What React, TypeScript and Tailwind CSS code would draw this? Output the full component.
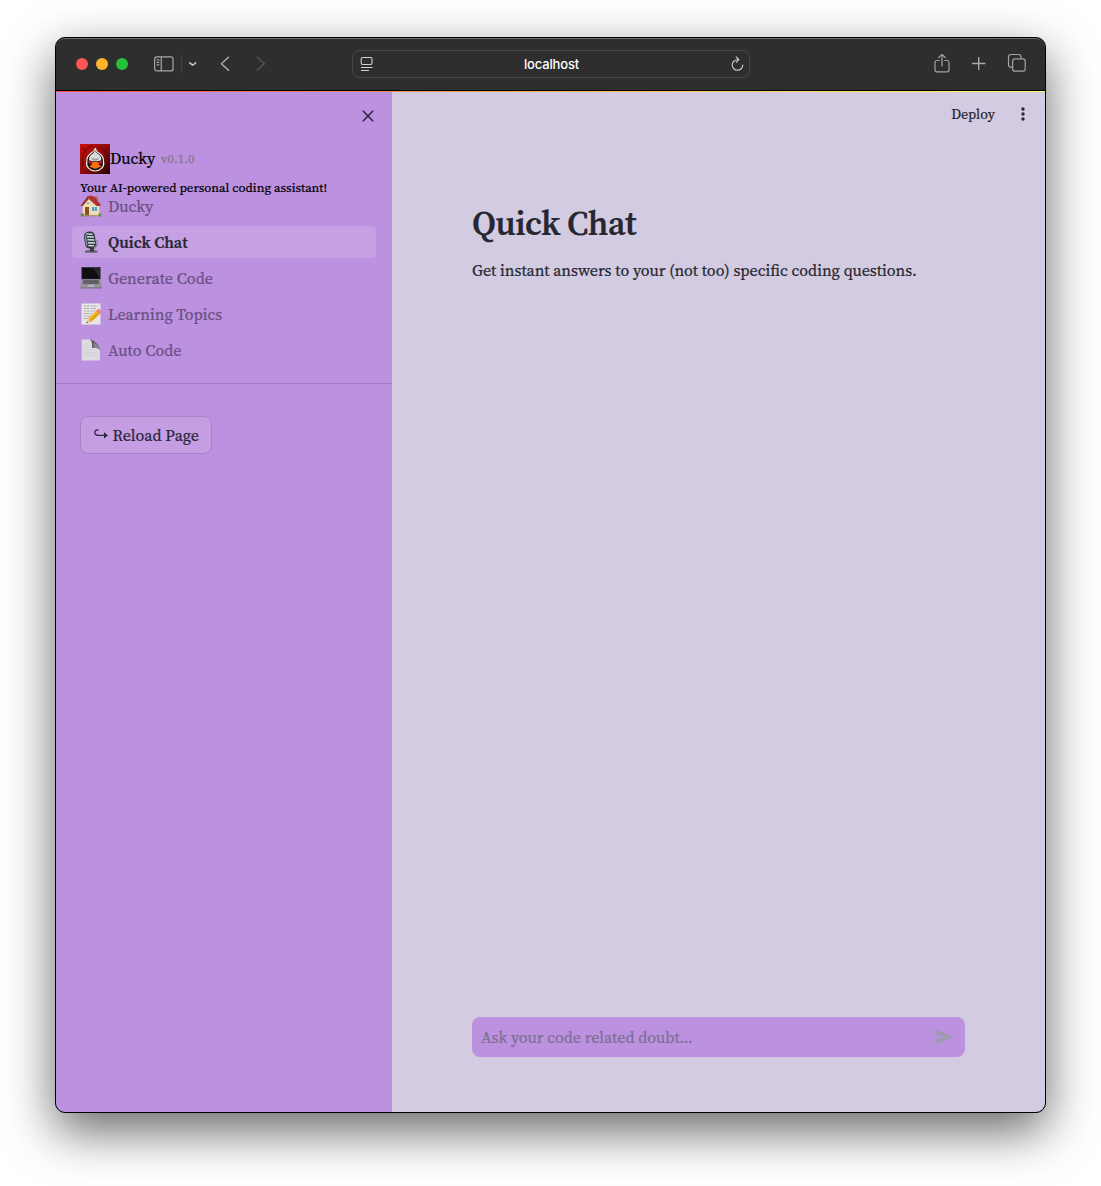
import React from "react";

function HouseIcon() {
  return (
    <svg width="22" height="22" viewBox="0 0 22 22">
      <path d="M14.500 1.500h3v6h-3z" fill="#b9604a" />
      <path d="M2.500 10L8.500 3l9 7.500h1.800v10H2.500z" fill="#eedcae" />
      <path d="M7.800 1L.8 10.500l1.400 1L8.800 4z" fill="#8c3432" />
      <path d="M7.500 1.500C8 .5 13 .8 14 1.500l7 8.500c-.5 1-3 1.500-4.500 1L8.800 4z" fill="#ae352f" />
      <rect x="5" y="12" width="4" height="8.500" fill="#8a5130" />
      <rect x="11.500" y="11.500" width="6" height="5" fill="#5a9cc5" stroke="#f7f0dc" strokeWidth=".8" />
      <path d="M14.500 11.500v5" stroke="#d9e8ee" strokeWidth=".6" />
      <path d="M4 20h6v1.500H4z" fill="#9a8a76" />
      <path d="M.8 18.500h3.200v3H.8zM18.500 18.500h2.800v3h-2.800z" fill="#5f8f3b" />
      <path d="M10 20h9v1.300h-9z" fill="#a99b78" />
      <circle cx="8" cy="8.200" r="1.200" fill="#8fb2c6" />
    </svg>
  );
}

function MicIcon() {
  return (
    <svg width="22" height="22" viewBox="0 0 22 22">
      <path d="M17 9c.8 5-1 8-3.500 9" fill="none" stroke="#77757f" strokeWidth="1" />
      <path d="M5 20.200c0-1.500 12.500-1.500 12.500 0v1.500H5z" fill="#66666c" />
      <rect x="10" y="15" width="4" height="5.500" fill="#3e3e44" />
      <g transform="rotate(-10 10 9)">
        <rect x="4.500" y=".5" width="11" height="17" rx="4.500" fill="#33393e" />
        <path d="M7 2.300l6.500 1.500M7.500 5.300l7 1.500M7.500 8.300l7 1.500M7.500 11.300l7 1.500M7.500 14.200l5.500 1.300" stroke="#cfe2e8" strokeWidth="1.400" />
        <path d="M6 3v11" stroke="#8b959a" strokeWidth="1.300" />
      </g>
    </svg>
  );
}

function LaptopIcon() {
  return (
    <svg width="22" height="22" viewBox="0 0 22 22">
      <path d="M1.300 0h19.400v12.500H1.300z" fill="#47434c" />
      <path d="M2.200 .8h17.600v11H2.200z" fill="#0f0e11" />
      <path d="M13.500 .8h6.300v11z" fill="#29272c" />
      <path d="M1.500 12.500h19l1.300 8H.2z" fill="#949297" />
      <path d="M3.500 13h15l.8 4H2.700z" fill="#626066" />
      <path d="M8 17.800h6l.5 2.200h-7z" fill="#b3b1b6" />
      <path d="M.2 20.300h21.600v1.200H.2z" fill="#77747c" />
    </svg>
  );
}

function MemoIcon() {
  return (
    <svg width="22" height="22" viewBox="0 0 22 22">
      <rect x="1.700" y=".5" width="18.800" height="21" fill="#e8e6e9" stroke="#cbc7cf" strokeWidth=".5" />
      <path d="M4 3h14M3.500 5.500h13M4 8h11M3.500 10.500h9M4 13h6M3.500 15.500h4" stroke="#96949c" strokeWidth=".8" strokeDasharray="2 .7 3 1" />
      <path d="M6.300 20.200l1.700-4.700 3.500 3.300z" fill="#e8c393" />
      <path d="M8 15.300L16.500 7.500l3.500 3.500-8.500 8z" fill="#f3b922" />
      <path d="M10.300 17.700l8.500-8" stroke="#dd9415" strokeWidth="1.200" />
      <path d="M16 8l1.800-1.700c1.200-1 4.500 2 3.300 3.200L19.500 11z" fill="#e88580" />
      <path d="M6.300 20.200l.6-1.700 1.100 1z" fill="#333" />
    </svg>
  );
}

function PageIcon() {
  return (
    <svg width="22" height="22" viewBox="0 0 22 22">
      <path d="M1.700.5h9.500l8.700 9v12H1.700z" fill="#deDce0" />
      <path d="M10 .5c3.500 0 9.800 6 9.900 10.500-1.600-2.300-4.700-2.800-8-2C12.500 5.500 12 2 10 .5z" fill="#5c5a60" />
      <path d="M14 3.500l-.5 5c3 0 5 .8 6.400 2.500-.1-2-3-5.500-5.900-7.500z" fill="#88858c" />
      <path d="M3.500 8h7M3.500 11h14M3.500 14h14M3.500 17h14" stroke="#cdcad1" strokeWidth=".8" />
    </svg>
  );
}

function DuckLogo() {
  return (
    <svg width="30" height="30" viewBox="0 0 30 30">
      <defs>
        <linearGradient id="duckBg" x1="0" y1="0" x2="1" y2="1">
          <stop offset="0" stopColor="#d00d08" />
          <stop offset=".5" stopColor="#8f0d0b" />
          <stop offset="1" stopColor="#230202" />
        </linearGradient>
      </defs>
      <rect width="30" height="30" fill="url(#duckBg)" />
      <path d="M3 23C0 9 7 3 13 2M27 23C30 10 23 4 18 2M6 7L2 4M24 7l4-3" fill="none" stroke="#5e0908" strokeWidth="1" />
      <path d="M15.300 4c.2 2.500 1.700 4 4.200 5.500 3 2 4.300 5 4 8.500 1.300 4.500-3.200 9-8.400 9s-9.600-4.500-8.300-9C6.500 14.500 8 11.500 10.500 9.500c2.500-1.500 4.300-3 4.800-5.500z" fill="#161313" stroke="#f2eee8" strokeWidth="1.200" />
      <path d="M15.300 5.500c.2 2.500 1.500 3.700 3.200 4.700 2.300 1.500 3.300 3.800 2.700 6l-3.200 1h-5.700l-3.200-1c-.5-2.200.7-4.500 2.700-6 1.800-1.200 3.200-2.300 3.500-4.700z" fill="#d9dad9" />
      <path d="M11.500 13.500c1.800 1.500 5.700 1.500 7.500 0-.3 2.500-1.700 3-3.700 3s-3.500-.5-3.800-3z" fill="#9fa0a2" />
      <path d="M8.300 16.500l5.200 1.800-1.500 1.800-3-.7zM22.200 16.500L17 18.300l1.500 1.800 3-.7z" fill="#c9220e" />
      <path d="M13 18h4.600c.8 2.300 1.700 3.300 3.500 4-.7 1.800-2.600 1.200-3.400 2-1 1-3.800 1-4.800 0-.8-.8-2.900-.2-3.400-2 1.800-.7 2.700-1.700 3.500-4z" fill="#f9700f" />
    </svg>
  );
}

const pages = [
  { label: "Ducky", icon: <HouseIcon /> },
  { label: "Quick Chat", icon: <MicIcon />, active: true },
  { label: "Generate Code", icon: <LaptopIcon /> },
  { label: "Learning Topics", icon: <MemoIcon /> },
  { label: "Auto Code", icon: <PageIcon /> },
];

function Toolbar() {
  return (
    <header className="flex h-[53px] shrink-0 items-center rounded-t-[9px] border-t border-b border-t-[#6a6a6a] border-b-black bg-[#2e2e2e] pb-[2px] pl-5 pr-[18px]">
      <div className="flex gap-2 pt-px">
        <i className="size-3 rounded-full bg-[#ff5550]" />
        <i className="size-3 rounded-full bg-[#ffb32b]" />
        <i className="size-3 rounded-full bg-[#27c138]" />
      </div>
      <svg className="ml-[26px]" width="20" height="16" viewBox="0 0 20 16" fill="none" stroke="#a6a6a6" strokeWidth="1.200">
        <rect x=".7" y=".9" width="18.300" height="14" rx="2" />
        <path d="M7.200 1v14M2.700 3.800h2.600M2.700 6.300h2.600M2.700 8.800h2.600" />
      </svg>
      <div className="ml-[7px] h-[18px] w-px bg-[#424242]" />
      <svg className="ml-[6px]" width="10" height="8" viewBox="0 0 10 8" fill="none" stroke="#c9c9c9" strokeWidth="1.500" strokeLinecap="round" strokeLinejoin="round">
        <path d="M1.700 2.800l3 2.300 3-2.300" />
      </svg>
      <svg className="ml-[21px]" width="12" height="16" viewBox="0 0 12 16" fill="none" stroke="#a9a9a9" strokeWidth="1.500" strokeLinecap="round" strokeLinejoin="round">
        <path d="M9.500 1.300L2.300 7.700l7.200 6.400" />
      </svg>
      <svg className="ml-[24px]" width="12" height="16" viewBox="0 0 12 16" fill="none" stroke="#555" strokeWidth="1.500" strokeLinecap="round" strokeLinejoin="round">
        <path d="M2.300 1.300L9.500 7.700l-7.200 6.400" />
      </svg>
      <div className="ml-[85px] flex h-7 w-[398px] items-center justify-between rounded-[7px] border border-[#474747] pl-[7px] pr-[5px]">
        <svg width="13" height="16" viewBox="0 0 13 16" fill="none" stroke="#d0d0d0" strokeWidth="1.100">
          <rect x="1.200" y="1.500" width="10.800" height="7" rx="1.500" />
          <path d="M1 11.500h11.500M1 14.500h8" />
        </svg>
        <span className="pt-[2px] font-['Inter','Liberation_Sans',sans-serif] text-[13px] font-medium tracking-[-0.15px] text-white">localhost</span>
        <svg width="14" height="16" viewBox="0 0 14 16" fill="none" stroke="#cecece" strokeWidth="1.100" strokeLinecap="round" strokeLinejoin="round">
          <path d="M8.300 3.700H7.500A5.300 5.300 0 1 0 12.800 9M6.200 1l2.700 2.700-2.700 2.600" />
        </svg>
      </div>
      <svg className="ml-auto" width="18" height="22" viewBox="0 0 18 22" fill="none" stroke="#a3a3a3" strokeWidth="1.200" strokeLinecap="round" strokeLinejoin="round">
        <path d="M6.200 7.500H4a2 2 0 0 0-2 2v7.300a2 2 0 0 0 2 2h10a2 2 0 0 0 2-2V9.500a2 2 0 0 0-2-2h-2.200M9 13V1.500M5.800 4.500L9 1.300l3.200 3.200" />
      </svg>
      <svg className="ml-5" width="16" height="16" viewBox="0 0 16 16" stroke="#a9a9a9" strokeWidth="1.400">
        <path d="M7.700 1v13M1 7.500h13.400" />
      </svg>
      <svg className="-mt-px ml-[20px]" width="20" height="20" viewBox="0 0 20 20" fill="none" stroke="#a3a3a3" strokeWidth="1.200">
        <rect x="5.600" y="5.800" width="12.600" height="12.400" rx="2.500" />
        <path d="M5.500 14.200H4a2.500 2.500 0 0 1-2.500-2.500V4A2.500 2.500 0 0 1 4 1.500h7.500A2.500 2.500 0 0 1 14 4v1.800" />
      </svg>
    </header>
  );
}

function Sidebar() {
  return (
    <aside className="flex w-[336px] shrink-0 flex-col bg-[#bb91e0]">
      <div className="flex h-[52px] items-center justify-end pr-[18px] pb-1">
        <svg width="12" height="12" viewBox="0 0 12 12" stroke="#31233c" strokeWidth="1.500">
          <path d="M.8 .8l10.400 10.400M11.200 .8L.8 11.200" />
        </svg>
      </div>
      <div className="flex h-[30px] items-center pl-6 leading-none">
        <DuckLogo />
        <span className="-mt-[2px] text-base text-black">Ducky</span>
        <span className="ml-[6px] text-[12.800px] text-[#83778c]">v0.1.0</span>
      </div>
      <p className="mt-[6px] h-4 pl-6 text-[12.800px] leading-4 whitespace-nowrap text-black">Your AI-powered personal coding assistant!</p>
      <nav className="-mt-[6px] flex flex-col gap-1 px-4">
        {pages.map((p) => (
          <a key={p.label} className={p.active ? "flex h-8 items-center gap-[6px] rounded bg-[#c5a0e5] px-2 font-semibold text-[#262730]" : "flex h-8 items-center gap-[6px] rounded px-2 text-[#694f82]"}>
            {p.icon}
            <span className="text-base leading-6 whitespace-nowrap">{p.label}</span>
          </a>
        ))}
      </nav>
      <hr className="mt-[17px] border-t border-[#a27bc2]" />
      <button className="mt-8 ml-6 flex h-[38px] w-[132px] items-center rounded-lg border border-[#a982c8] bg-[#c49de3] pl-[13px] text-[#292635]">
        <svg className="-mt-px" width="14" height="12" viewBox="0 0 14 12" fill="none" stroke="#292635" strokeWidth="1.300">
          <path d="M4.500 .8C2 .8 .8 1.800 .8 3.600S2 6.400 4.500 6.400H11" />
          <path d="M10 3.200L14 6.400 10 9.600z" fill="#292635" stroke="none" />
        </svg>
        <span className="ml-[4.500px] text-base whitespace-nowrap">Reload Page</span>
      </button>
    </aside>
  );
}

function Main() {
  return (
    <main className="flex flex-1 flex-col bg-[#d3cbe1] text-[#262730]">
      <div className="flex h-[44px] items-center justify-end pr-[20px]">
        <span className="text-[14px]">Deploy</span>
        <svg className="ml-[26px]" width="4" height="14" viewBox="0 0 4 14" fill="#292734">
          <circle cx="2" cy="2" r="1.700" /><circle cx="2" cy="7" r="1.700" /><circle cx="2" cy="12" r="1.700" />
        </svg>
      </div>
      <div className="flex flex-1 flex-col pr-20 pl-20 pb-[55px]">
        <h1 className="mt-[65px] text-[34px] leading-[44px] font-semibold tracking-[-0.5px] whitespace-nowrap">Quick Chat</h1>
        <p className="mt-[13px] text-base leading-6 whitespace-nowrap">Get instant answers to your (not too) specific coding questions.</p>
        <div className="mt-auto flex h-10 items-center justify-between rounded-lg bg-[#bb91e0] pr-[11px] pl-[9px] text-[#7c7094]">
          <span className="text-base whitespace-nowrap">Ask your code related doubt...</span>
          <svg width="19" height="16" viewBox="0 0 19 16" fill="#a09bae">
            <path d="M1 .5L18.800 8 1 15.500v-5.800L10 8 1 6.300z" />
          </svg>
        </div>
      </div>
    </main>
  );
}

export default function App() {
  return (
    <div className="h-[1186px] w-[1101px] overflow-hidden bg-white pt-[37px] pl-[55px] font-['Source_Serif_Pro','Source_Serif_4','Liberation_Serif',serif]">
      <div className="flex h-[1076px] w-[991px] flex-col overflow-hidden rounded-[10px] border border-black bg-[#2e2e2e] shadow-[0_18px_50px_rgba(0,0,0,0.6)]">
        <Toolbar />
        <div className="h-px shrink-0 bg-linear-to-r from-[#ff4b4b] to-[#fffd65]" />
        <div className="flex min-h-0 flex-1 [-webkit-text-stroke:0.2px]">
          <Sidebar />
          <Main />
        </div>
      </div>
    </div>
  );
}
